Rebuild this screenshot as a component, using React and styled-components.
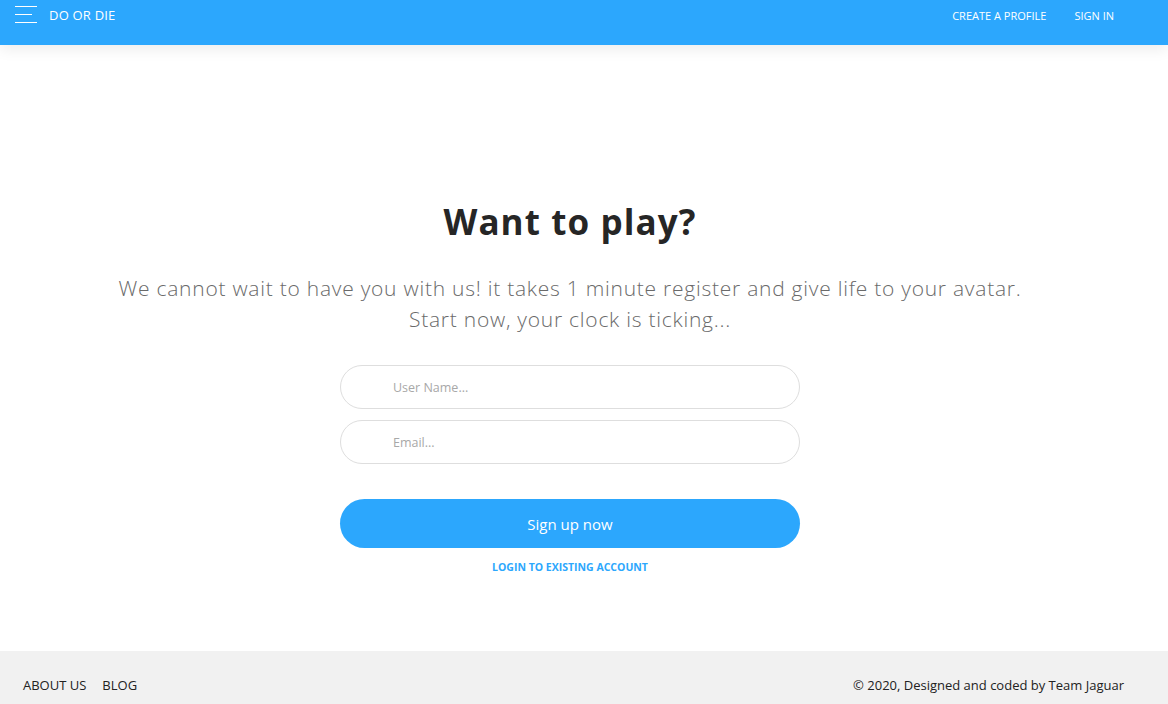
import React from 'react';
import styled, { createGlobalStyle } from 'styled-components';

const BLUE = '#2ca7fd';

const GlobalStyle = createGlobalStyle`
  html, body {
    margin: 0;
    padding: 0;
    background: #fff;
    font-family: "Open Sans", "Noto Sans", "Liberation Sans", sans-serif;
  }
  * { box-sizing: border-box; }
`;

const Page = styled.div`
  min-height: 704px;
  display: flex;
  flex-direction: column;
`;

const Header = styled.header`
  height: 45px;
  background: ${BLUE};
  box-shadow: 0 4px 14px rgba(0, 0, 0, 0.08);
  display: flex;
  justify-content: space-between;
  align-items: flex-start;
  padding: 0 54px 0 15px;
  color: #fff;
`;

const Brand = styled.div`
  display: flex;
  align-items: center;
  gap: 12px;
  height: 30px;
  font-size: 13px;
  letter-spacing: 0.2px;
`;

const Burger = styled.div`
  width: 22px;
  display: flex;
  flex-direction: column;
  gap: 7px;
  margin-top: -1px;

  span {
    display: block;
    height: 1px;
    background: #fff;
  }
  .short { width: 17px; }
`;

const Nav = styled.nav`
  display: flex;
  gap: 28px;
  height: 30px;
  align-items: center;
  font-size: 11px;
`;

const NavLink = styled.a`
  color: #fff;
  text-decoration: none;
  text-transform: uppercase;
`;

const Main = styled.main`
  flex: 1;
  display: flex;
  flex-direction: column;
  align-items: center;
  padding: 155px 28px 0 0;
`;

const Title = styled.h1`
  margin: 0;
  font-size: 35px;
  font-weight: 700;
  letter-spacing: 1.1px;
  color: #262626;
  line-height: 44px;
`;

const Lead = styled.p`
  margin: 29px 0 0;
  font-size: 21px;
  font-weight: 300;
  letter-spacing: 0.75px;
  color: #6a6a6a;
  line-height: 31px;
  text-align: center;
`;

const Form = styled.form`
  width: 460px;
  margin-top: 30px;
  display: flex;
  flex-direction: column;
  gap: 11px;
`;

const Input = styled.input`
  height: 44px;
  border: 1px solid #dedede;
  border-radius: 22px;
  padding: 0 0 0 52px;
  font-family: inherit;
  font-size: 12.5px;
  color: #444;
  outline: none;

  &::placeholder { color: #a8a8a8; }
`;

const Button = styled.button`
  margin-top: 24px;
  height: 49px;
  border: none;
  border-radius: 25px;
  background: ${BLUE};
  color: #fff;
  font-family: inherit;
  font-size: 15px;
  cursor: pointer;
`;

const LoginLink = styled.a`
  margin-top: 12px;
  font-size: 10.5px;
  font-weight: 700;
  color: ${BLUE};
  text-decoration: none;
  text-transform: uppercase;
`;

const Footer = styled.footer`
  height: 53px;
  background: #f1f1f1;
  display: flex;
  justify-content: space-between;
  align-items: flex-end;
  padding: 0 44px 10px 23px;
  font-size: 13px;
  color: #222;
`;

const FooterLinks = styled.div`
  display: flex;
  gap: 16px;
`;

const FooterLink = styled.a`
  color: #222;
  text-decoration: none;
`;

export default function App() {
  return (
    <Page>
      <GlobalStyle />
      <Header>
        <Brand>
          <Burger>
            <span />
            <span className='short' />
            <span />
          </Burger>
          DO OR DIE
        </Brand>
        <Nav>
          <NavLink href='#'>Create a profile</NavLink>
          <NavLink href='#'>Sign in</NavLink>
        </Nav>
      </Header>
      <Main>
        <Title>Want to play?</Title>
        <Lead>
          We cannot wait to have you with us! it takes 1 minute register and give life to your avatar.
          <br />
          Start now, your clock is ticking...
        </Lead>
        <Form onSubmit={(e) => e.preventDefault()}>
          <Input placeholder='User Name...' />
          <Input placeholder='Email...' />
          <Button type='submit'>Sign up now</Button>
        </Form>
        <LoginLink href='#'>Login to existing account</LoginLink>
      </Main>
      <Footer>
        <FooterLinks>
          <FooterLink href='#'>ABOUT US</FooterLink>
          <FooterLink href='#'>BLOG</FooterLink>
        </FooterLinks>
        <span>© 2020, Designed and coded by Team Jaguar</span>
      </Footer>
    </Page>
  );
}
